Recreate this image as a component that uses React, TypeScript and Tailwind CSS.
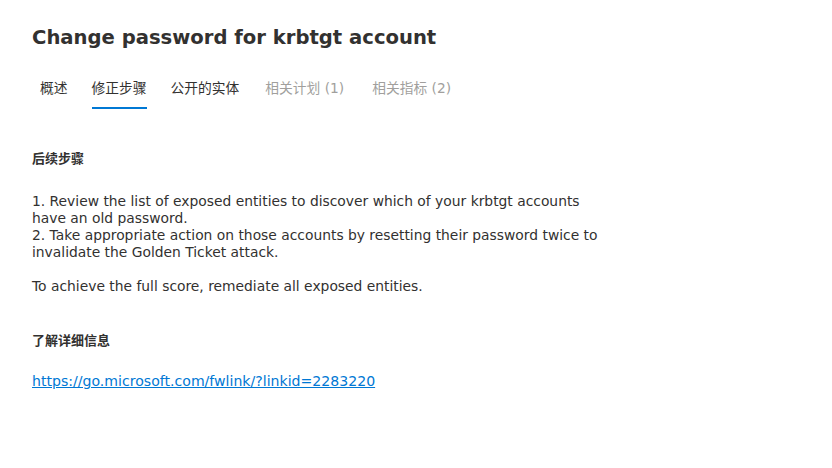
import React from "react";

export default function App() {
  const font = { fontFamily: '"DejaVu Sans", "Noto Sans CJK SC", sans-serif' };
  return (
    <div className="w-[832px] h-[468px] bg-white text-[#323130]" style={font}>
      <div className="pl-[32px] pt-[24px]">
        <h1 className="text-[19.6px] font-bold leading-[28px] text-[#323130]">Change password for krbtgt account</h1>
        <div className="mt-[24px] flex items-start pl-[8px] text-[13.75px]">
          <span className="leading-[24px]">概述</span>
          <div className="ml-[24px] flex flex-col">
            <span className="leading-[24px]">修正步骤</span>
            <div className="mt-[7px] h-[2px] bg-[#0078d4]" />
          </div>
          <span className="ml-[24px] leading-[24px]">公开的实体</span>
          <span className="ml-[26px] leading-[24px] text-[#a19f9d]">相关计划 (1)</span>
          <span className="ml-[28px] leading-[24px] text-[#a19f9d]">相关指标 (2)</span>
        </div>
        <div className="mt-[40px] text-[13px] font-bold leading-[20px]">后续步骤</div>
        <div className="mt-[24px] w-[580px] text-[13.85px] leading-[17px]">
          <p>1. Review the list of exposed entities to discover which of your krbtgt accounts have an old password.</p>
          <p>2. Take appropriate action on those accounts by resetting their password twice to invalidate the Golden Ticket attack.</p>
          <p className="mt-[17px]">To achieve the full score, remediate all exposed entities.</p>
        </div>
        <div className="mt-[36px] text-[13px] font-bold leading-[20px]">了解详细信息</div>
        <a href="#" className="mt-[20px] block text-[14.1px] leading-[20px] text-[#0078d4] underline">https://go.microsoft.com/fwlink/?linkid=2283220</a>
      </div>
    </div>
  );
}
